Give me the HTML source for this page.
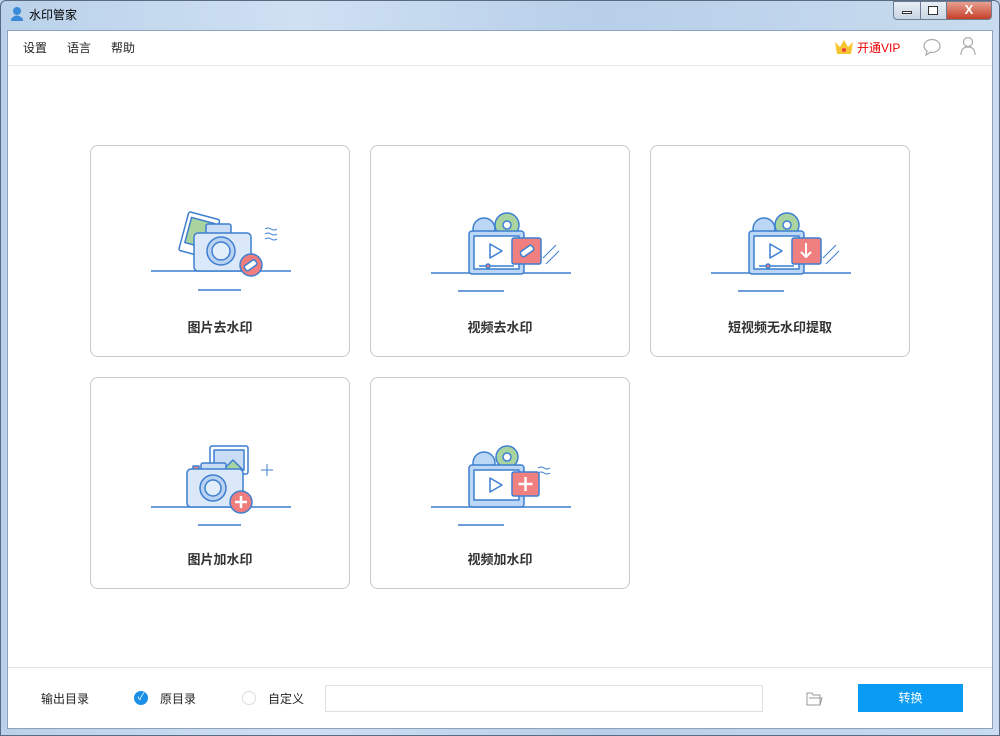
<!DOCTYPE html>
<html><head><meta charset="utf-8"><style>
*{margin:0;padding:0;box-sizing:border-box}
body{width:1000px;height:736px;overflow:hidden;font-family:"Liberation Sans","Noto Sans CJK SC",sans-serif;background:#bcd4ec;position:relative}
.frame{position:absolute;left:0;top:0;width:1000px;height:736px;border:1px solid #5a6a80;border-radius:6px 6px 0 0;background:linear-gradient(90deg,#b9d1ea,#cfe0f2 30%,#b7cfe9 60%,#c9dcef);}
.title{position:absolute;left:29px;top:6px;font-size:12px;color:#000}
.content{position:absolute;left:7px;top:30px;width:986px;height:699px;background:#fff;border:1px solid #8ea3bb}
.menu{position:absolute;top:8px;font-size:12px;color:#222}
.card{position:absolute;width:260px;height:212px;border:1px solid #c8c8c8;border-radius:8px;background:#fff}
.card svg{position:absolute;left:50px;top:55px}
.card .t{position:absolute;left:0;right:0;top:171px;text-align:center;font-size:13px;font-weight:bold;color:#333}
.wb{position:absolute;top:1px;height:19px;border:1px solid #6b7c93;}
</style></head><body>
<div class="frame"></div>
<svg style="position:absolute;left:9px;top:6px" width="16" height="16"><circle cx="8" cy="5" r="4" fill="#3a8ad8"/><path d="M2 13 Q8 6 14 13 Z" fill="#3a8ad8"/><rect x="2" y="13" width="12" height="2" fill="#3a8ad8"/></svg>
<div class="title">水印管家</div>
<div class="wb" style="left:893px;width:28px;border-radius:0 0 0 4px;background:linear-gradient(#e8eef5,#c9d5e3)"></div>
<div class="wb" style="left:920px;width:27px;background:linear-gradient(#e8eef5,#c9d5e3)"></div>
<div class="wb" style="left:946px;width:46px;border-radius:0 0 4px 0;background:linear-gradient(#e8a090,#c4402a)"></div>
<div style="position:absolute;left:902px;top:11px;width:10px;height:3px;border:1px solid #333;background:#fff"></div>
<div style="position:absolute;left:928px;top:6px;width:10px;height:9px;border:1px solid #333;background:#fff"></div>
<div style="position:absolute;left:946px;top:2px;width:46px;text-align:center;color:#fff;font-weight:bold;font-size:13px">X</div>
<div class="content">
 <div class="menu" style="left:15px">设置</div>
 <div class="menu" style="left:59px">语言</div>
 <div class="menu" style="left:103px">帮助</div>
 <svg style="position:absolute;left:826px;top:7px" width="20" height="18"><path d="M1 4 L6 9 L10 2 L14 9 L19 4 L17 16 L3 16 Z" fill="#f6c530"/><circle cx="10" cy="12" r="2" fill="#e44"/></svg>
 <div class="menu" style="left:849px;color:#e00">开通VIP</div>
 <svg style="position:absolute;left:914px;top:7px" width="20" height="18"><ellipse cx="10" cy="8" rx="8" ry="6.5" fill="none" stroke="#aaa" stroke-width="1.2"/><path d="M5 13 L4 17 L9 14" fill="#fff" stroke="#aaa" stroke-width="1.2"/></svg>
 <svg style="position:absolute;left:951px;top:5px" width="18" height="20"><circle cx="9" cy="6" r="4.5" fill="none" stroke="#aaa" stroke-width="1.2"/><path d="M2 19 Q2 11 9 11 Q16 11 16 19" fill="none" stroke="#aaa" stroke-width="1.2"/></svg>
 <div style="position:absolute;left:0;top:34px;width:984px;height:1px;background:#e6e6e6"></div>
 <div style="position:absolute;left:0;top:636px;width:984px;height:1px;background:#e0e0e0"></div>
 <div class="menu" style="left:33px;top:659px">输出目录</div>
 <div style="position:absolute;left:126px;top:660px;width:14px;height:14px;border-radius:50%;background:#1a8fe8;color:#fff;font-size:10px;text-align:center;line-height:14px">✓</div>
 <div class="menu" style="left:152px;top:659px">原目录</div>
 <div style="position:absolute;left:234px;top:660px;width:14px;height:14px;border-radius:50%;border:1px solid #ddd"></div>
 <div class="menu" style="left:260px;top:659px">自定义</div>
 <div style="position:absolute;left:317px;top:654px;width:438px;height:27px;border:1px solid #e0e0e0"></div>
 <svg style="position:absolute;left:797px;top:658px" width="18" height="18"><path d="M2 4 L7 4 L8 6 L15 6 L15 16 L2 16 Z M4 9 L17 9 L15 16" fill="none" stroke="#999" stroke-width="1"/></svg>
 <div style="position:absolute;left:850px;top:653px;width:105px;height:28px;background:#0a9cf5;color:#fff;font-size:12px;text-align:center;line-height:28px">转换</div>
</div>

<div class="card" style="left:90px;top:145px">
<svg width="160" height="100"><g stroke="#3d7fd0" stroke-width="1.5" stroke-linejoin="round">
<line x1="10" y1="70" x2="150" y2="70"/><line x1="57" y1="89" x2="100" y2="89"/>
<g transform="rotate(15 58 35)"><rect x="42" y="14" width="32" height="40" rx="2" fill="#fff"/><rect x="46" y="19" width="24" height="26" fill="#a9d4a0"/></g>
<rect x="65" y="23" width="25" height="10" rx="2" fill="#c9dcf5"/>
<rect x="53" y="32" width="57" height="38" rx="4" fill="#dbe8f9"/>
<circle cx="80" cy="50" r="14" fill="#b9d2f2"/><circle cx="80" cy="50" r="9" fill="#e3eefb"/>
<circle cx="110" cy="64" r="11" fill="#f07d7d"/><rect x="103" y="61" width="13" height="6" rx="2" fill="#fff" transform="rotate(-35 110 64)"/>
<path d="M124 28 q3 -2 6 0 q3 2 6 0 M124 33 q3 -2 6 0 q3 2 6 0 M124 38 q3 -2 6 0 q3 2 6 0" fill="none" stroke-width="1"/>
</g></svg><div class="t">图片去水印</div></div>

<div class="card" style="left:370px;top:145px">
<svg width="160" height="100"><g stroke="#3d7fd0" stroke-width="1.5" stroke-linejoin="round">
<line x1="10" y1="72" x2="150" y2="72"/><line x1="37" y1="90" x2="83" y2="90"/>
<circle cx="63" cy="28" r="11" fill="#bcd6f5"/><circle cx="86" cy="24" r="12" fill="#a9d4a0"/><circle cx="86" cy="24" r="4" fill="#fff"/>
<rect x="48" y="30" width="55" height="43" rx="3" fill="#bcd6f5"/><rect x="53" y="35" width="45" height="33" fill="#fff"/>
<path d="M69 43 L69 57 L81 50 Z" fill="#fff"/><line x1="58" y1="65" x2="93" y2="65"/><circle cx="67" cy="65" r="2" fill="#f08080"/>
<rect x="91" y="37" width="29" height="26" rx="2" fill="#f08080"/><rect x="99" y="47" width="14" height="6" rx="2" fill="#fff" transform="rotate(-35 106 50)"/>
<path d="M122 57 L135 44 M125 63 L138 50" stroke-width="1"/>
</g></svg><div class="t">视频去水印</div></div>

<div class="card" style="left:650px;top:145px">
<svg width="160" height="100"><g stroke="#3d7fd0" stroke-width="1.5" stroke-linejoin="round">
<line x1="10" y1="72" x2="150" y2="72"/><line x1="37" y1="90" x2="83" y2="90"/>
<circle cx="63" cy="28" r="11" fill="#bcd6f5"/><circle cx="86" cy="24" r="12" fill="#a9d4a0"/><circle cx="86" cy="24" r="4" fill="#fff"/>
<rect x="48" y="30" width="55" height="43" rx="3" fill="#bcd6f5"/><rect x="53" y="35" width="45" height="33" fill="#fff"/>
<path d="M69 43 L69 57 L81 50 Z" fill="#fff"/><line x1="58" y1="65" x2="93" y2="65"/><circle cx="67" cy="65" r="2" fill="#f08080"/>
<rect x="91" y="37" width="29" height="26" rx="2" fill="#f08080"/><path d="M105 42 L105 56 M100 51 L105 56 L110 51" stroke="#fff" stroke-width="2" fill="none"/>
<path d="M122 57 L135 44 M125 63 L138 50" stroke-width="1"/>
</g></svg><div class="t">短视频无水印提取</div></div>

<div class="card" style="left:90px;top:377px">
<svg width="160" height="100"><g stroke="#3d7fd0" stroke-width="1.5" stroke-linejoin="round">
<line x1="10" y1="74" x2="150" y2="74"/><line x1="57" y1="92" x2="100" y2="92"/>
<rect x="69" y="13" width="38" height="28" rx="2" fill="#fff"/><rect x="73" y="17" width="30" height="20" fill="#c9dcf5"/><path d="M82 37 L92 27 L102 37 Z" fill="#a9d4a0"/>
<rect x="52" y="33" width="6" height="4" fill="#f08080"/>
<rect x="60" y="30" width="25" height="8" rx="2" fill="#c9dcf5"/>
<rect x="46" y="36" width="56" height="38" rx="4" fill="#dbe8f9"/>
<circle cx="72" cy="55" r="13" fill="#b9d2f2"/><circle cx="72" cy="55" r="8" fill="#e3eefb"/>
<circle cx="100" cy="69" r="11" fill="#f07d7d"/><path d="M100 63 L100 75 M94 69 L106 69" stroke="#fff" stroke-width="2.5"/>
<path d="M126 31 L126 43 M120 37 L132 37" stroke-width="1"/>
</g></svg><div class="t">图片加水印</div></div>

<div class="card" style="left:370px;top:377px">
<svg width="160" height="100"><g stroke="#3d7fd0" stroke-width="1.5" stroke-linejoin="round">
<line x1="10" y1="74" x2="150" y2="74"/><line x1="37" y1="92" x2="83" y2="92"/>
<circle cx="63" cy="30" r="11" fill="#bcd6f5"/><circle cx="86" cy="24" r="11" fill="#a9d4a0"/><circle cx="86" cy="24" r="4" fill="#fff"/>
<rect x="48" y="32" width="55" height="42" rx="3" fill="#bcd6f5"/><rect x="53" y="37" width="45" height="30" fill="#fff"/>
<path d="M69 45 L69 59 L81 52 Z" fill="#fff"/>
<rect x="91" y="39" width="27" height="24" rx="2" fill="#f08080"/><path d="M104.5 44 L104.5 58 M97.5 51 L111.5 51" stroke="#fff" stroke-width="2.5"/>
<path d="M117 35 q3 -2 6 0 q3 2 6 0 M117 40 q3 -2 6 0 q3 2 6 0" fill="none" stroke-width="1"/>
</g></svg><div class="t">视频加水印</div></div>
</body></html>
